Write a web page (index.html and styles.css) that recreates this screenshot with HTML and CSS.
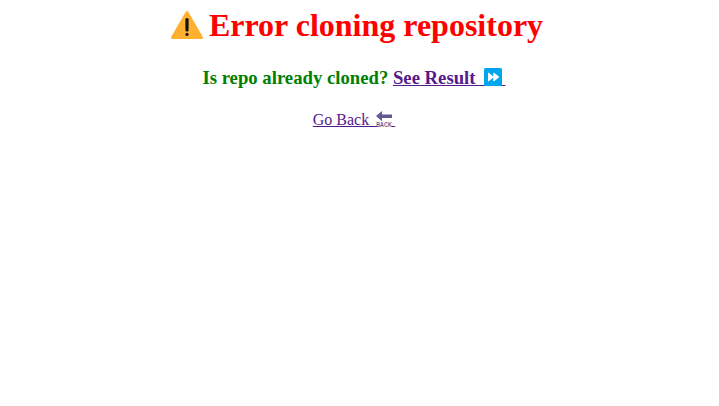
FILE: index.html
```html
<!DOCTYPE html>
<html lang="en">
<head>
<meta charset="utf-8">
<title>Error cloning repository</title>
<link rel="stylesheet" href="styles.css">
</head>
<body>
<h1 class="title"><svg class="warning" viewBox="0 0 32 28" aria-hidden="true"><path d="M14.6 1Q16-.8 17.4 1L31.6 25.5Q32.6 28 30.4 28H1.6Q-.6 28 .4 25.5Z" fill="#ffb02e"/><rect x="14.4" y="7" width="3.2" height="13.5" rx="1.5" fill="#111"/><circle cx="16" cy="23.4" r="1.6" fill="#111"/></svg>Error cloning repository</h1>
<h3 class="question">Is repo already cloned? <a href="#" class="link">See Result&nbsp;&nbsp;<svg class="forward" viewBox="0 0 18 18" aria-hidden="true"><rect width="18" height="18" rx="1.5" fill="#00a6ed"/><path d="M4.5 5v8l4.8-4zM9.8 5v8l5-4z" fill="#fff" stroke="#fff" stroke-width="1" stroke-linejoin="round"/></svg>&nbsp;</a></h3>
<p class="back"><a href="#" class="link">Go Back&nbsp;&nbsp;<svg class="arrow" viewBox="0 0 16 18" aria-hidden="true"><path d="M0 5L6 0V3.4H16V6.9H6V10.2Z" fill="#635994"/><text class="caption" x="0.2" y="15.6" textLength="15.6" lengthAdjust="spacingAndGlyphs">BACK</text></svg>&nbsp;</a></p>
</body>
</html>
```

FILE: styles.css
```css
body {
  margin: 7px 19px 8px 8px;
  background: #fff;
  font-family: "Liberation Serif", "Times New Roman", serif;
  font-size: 16px;
  text-align: center;
  white-space: nowrap;
}
.title {
  margin: 0;
  padding-left: 6px;
  color: red;
  font-size: 32px;
  line-height: 36px;
}
.warning {
  width: 32px;
  height: 28px;
  margin-right: 6px;
  vertical-align: -3px;
}
.question {
  margin: 24px 0 0;
  color: green;
  font-size: 18.72px;
  line-height: 22px;
}
.link {
  color: #551a8b;
  text-decoration: underline;
}
.forward {
  position: relative;
  width: 18px;
  height: 18px;
  margin: 0 -1px;
  vertical-align: -2px;
}
.back {
  margin: 21px 0 0;
  line-height: 20px;
}
.arrow {
  position: relative;
  width: 16px;
  height: 18px;
  margin: 0 -1px;
  overflow: visible;
  vertical-align: -4px;
}
.caption {
  fill: #635994;
  font: bold 6.5px "Liberation Sans", sans-serif;
}
```
